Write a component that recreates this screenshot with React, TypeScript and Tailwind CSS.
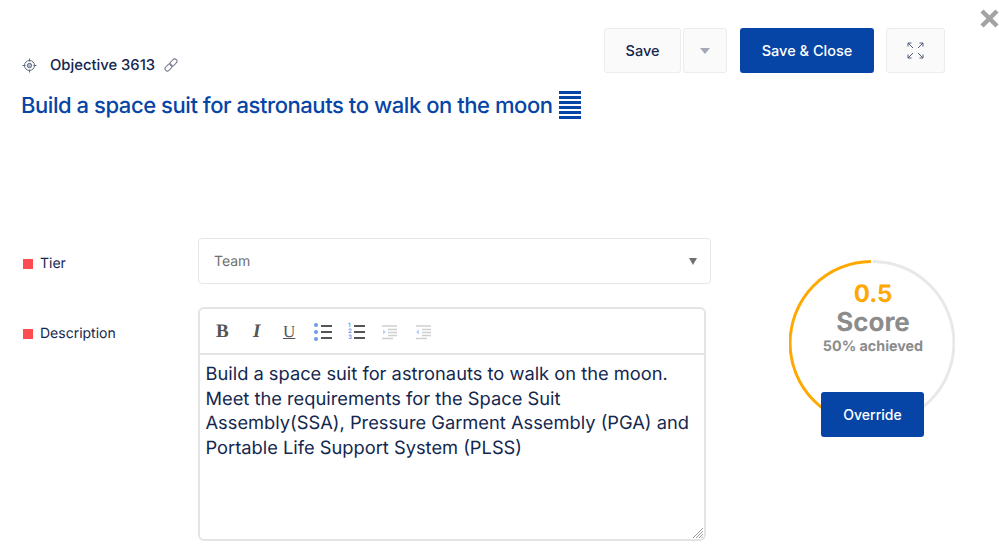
const font = { fontFamily: "Inter, 'Liberation Sans', sans-serif" };
const serif = { fontFamily: "'Liberation Serif', serif" };

function TargetIcon() {
  return (
    <svg width="15" height="15" viewBox="0 0 15 15" fill="none" stroke="#5f6b85" strokeWidth="1">
      <circle cx="7.5" cy="7.5" r="5" />
      <circle cx="7.5" cy="7.5" r="2.2" fill="#b4bac8" />
      <path d="M7.5 0.5v3M7.5 11.5v3M0.5 7.5h3M11.5 7.5h3" />
    </svg>
  );
}

function LinkIcon() {
  return (
    <svg width="16" height="16" viewBox="0 0 16 16" fill="none" stroke="#737b8c" strokeWidth="1">
      <g transform="rotate(-45 8 8)">
        <rect x="0.5" y="5.7" width="8" height="4.6" rx="2.3" />
        <rect x="7.5" y="5.7" width="8" height="4.6" rx="2.3" />
      </g>
    </svg>
  );
}

function ExpandIcon() {
  return (
    <svg width="17" height="17" viewBox="0 0 17 17" fill="none" stroke="#4d5a78" strokeWidth="1">
      <path d="M1 1l5 5M1 1v3.5M1 1h3.5M16 1l-5 5M16 1v3.5M16 1h-3.5M1 16l5-5M1 16v-3.5M1 16h3.5M16 16l-5-5M16 16v-3.5M16 16h-3.5" />
    </svg>
  );
}

function ListLines() {
  return (
    <div className="flex flex-col gap-[4px]">
      <div className="h-[2px] w-[11px] bg-[#555]" />
      <div className="h-[2px] w-[11px] bg-[#555]" />
      <div className="h-[2px] w-[11px] bg-[#555]" />
    </div>
  );
}

function Bullets() {
  return (
    <div className="flex w-[18px] items-center gap-[3px]">
      <div className="flex flex-col gap-[3px]">
        <div className="size-[4px] rounded-full bg-[#6c9be8]" />
        <div className="size-[4px] rounded-full bg-[#6c9be8]" />
        <div className="size-[4px] rounded-full bg-[#6c9be8]" />
      </div>
      <ListLines />
    </div>
  );
}

function Numbers() {
  return (
    <div className="flex w-[18px] items-center gap-[2px]">
      <div className="flex flex-col text-[6px] font-bold leading-[6px] text-[#6c9be8]">
        <span>1</span>
        <span>2</span>
        <span>3</span>
      </div>
      <ListLines />
    </div>
  );
}

function Indent({ flip }: { flip?: boolean }) {
  return (
    <svg width="18" height="16" viewBox="0 0 18 16" fill="none" stroke="#cfcfcf" strokeWidth="1.4">
      <path d="M1 2h15M7 5.5h9M7 8.5h9M7 11.5h9M1 14.5h11" />
      <path d={flip ? "M1 8l3-2.5v5z" : "M5 8L2 5.5v5z"} fill="#bcd3f3" stroke="none" />
    </svg>
  );
}

function ScoreRing() {
  return (
    <svg width="166" height="166" viewBox="0 0 166 166" fill="none" strokeWidth="3">
      <path d="M84 1.5A81.5 81.5 0 0 1 83 164.5" stroke="#e8e8e8" />
      <path d="M82 1.5A81.5 81.5 0 0 0 83 164.5" stroke="#ffa800" />
    </svg>
  );
}

export default function App() {
  return (
    <div className="relative h-[551px] w-[999px] overflow-hidden bg-white text-[#14274e] [text-rendering:geometricPrecision]" style={font}>
      <div className="absolute right-0 top-[6px] text-[#a3a3a3]">
        <svg width="20" height="24" viewBox="0 0 20 24" stroke="currentColor" strokeWidth="4.5">
          <path d="M3 5l15 15M18 5L3 20" />
        </svg>
      </div>

      <header className="flex h-[238px] justify-between pl-[21px] pr-[54px] pt-[28px]">
        <div className="pt-[26px]">
          <div className="flex items-center text-[14.8px] font-medium">
            <span className="ml-[1px]">
              <TargetIcon />
            </span>
            <span className="ml-[13px]">Objective 3613</span>
            <span className="ml-[8px]">
              <LinkIcon />
            </span>
          </div>
          <div className="mt-[14px] flex items-center gap-[6px] text-[22px] font-medium leading-[28px] tracking-[-0.44px] text-[#0645a5]">
            <span className="pt-[2px]">Build a space suit for astronauts to walk on the moon</span>
            <div className="flex w-[22px] flex-col gap-[2px]">
              <div className="h-[3px] bg-[#0645a5]" />
              <div className="h-[3px] bg-[#0645a5]" />
              <div className="h-[3px] bg-[#0645a5]" />
              <div className="h-[3px] bg-[#0645a5]" />
              <div className="h-[3px] bg-[#0645a5]" />
              <div className="h-[3px] bg-[#0645a5]" />
            </div>
          </div>
        </div>

        <div className="flex h-[45px] items-stretch text-[14.5px] font-medium">
          <button className="w-[77px] rounded-[3px] border border-[#ececec] bg-[#fafafa]">Save</button>
          <button className="ml-[2px] flex w-[44px] items-center justify-center rounded-[3px] border border-[#ececec] bg-[#fafafa]">
            <span className="size-0 border-x-[5px] border-t-[6px] border-x-transparent border-t-[#a4a7b5]" />
          </button>
          <button className="ml-[13px] w-[134px] rounded-[3px] bg-[#0645a5] text-white">Save &amp; Close</button>
          <button className="ml-[12px] flex w-[59px] items-center justify-center rounded-[3px] border border-[#ececec] bg-[#fafafa]">
            <ExpandIcon />
          </button>
        </div>
      </header>

      <main className="flex pl-[23px]">
        <div className="w-[175px] text-sm">
          <div className="flex h-[46px] items-center gap-[7px] pt-[5px]">
            <div className="size-[10px] bg-[#ff4d4f]" />
            <span>Tier</span>
          </div>
          <div className="mt-[23px] flex h-[46px] items-center gap-[7px] pt-[8px]">
            <div className="size-[10px] bg-[#ff4d4f]" />
            <span>Description</span>
          </div>
        </div>

        <div className="w-[513px]">
          <div className="flex h-[46px] items-center justify-between rounded-[4px] border border-[#e6e6e6] pl-[15px] pr-[13px] pt-[1px] text-sm text-[#6f6f6f]">
            <span>Team</span>
            <span className="size-0 border-x-[4px] border-t-[7px] border-x-transparent border-t-[#707070]" />
          </div>

          <div className="relative mt-[23px] h-[234px] w-[508px] rounded-[6px] border-2 border-[#e4e4e4]">
            <div className="flex h-[46px] items-center border-b-2 border-[#e4e4e4] pl-[16px] pt-[2px]">
              <span className="w-[37px] text-[19px] font-bold text-[#555]" style={serif}>
                B
              </span>
              <span className="w-[30px] text-[19px] font-bold italic text-[#555]" style={serif}>
                I
              </span>
              <span className="w-[31px] text-[17px] text-[#555] underline" style={serif}>
                U
              </span>
              <Bullets />
              <div className="w-[16px]" />
              <Numbers />
              <div className="w-[15px]" />
              <Indent />
              <div className="w-[16px]" />
              <Indent flip />
            </div>
            <p className="px-[5.5px] pt-[7px] text-[18.3px] leading-[24.5px]">
              Build a space suit for astronauts to walk on the moon. Meet the requirements for the Space Suit Assembly(SSA), Pressure Garment Assembly (PGA) and Portable Life Support System (PLSS)
            </p>
            <svg className="absolute bottom-[1px] right-[1px]" width="10" height="10" viewBox="0 0 10 10" stroke="#9a9a9a" strokeWidth="1">
              <path d="M0 10L10 0M3 10l7-7M6 10l4-4M8.5 10L10 8.5" />
            </svg>
          </div>
        </div>

        <div className="relative ml-[78px] mt-[22px] h-[166px] w-[166px]">
          <ScoreRing />
          <div className="absolute inset-x-0 top-[19px] flex flex-col items-center pl-[2px] font-bold">
            <span className="text-[24px] leading-[30px] text-[#ffa800]">0.5</span>
            <span className="text-[26px] leading-[28px] text-[#8c8c8c]">Score</span>
            <span className="text-[14.3px] leading-[20px] text-[#8c8c8c]">50% achieved</span>
          </div>
          <button className="absolute left-[32px] top-[132px] h-[45px] w-[103px] rounded-[3px] bg-[#0645a5] text-sm font-medium text-white">
            Override
          </button>
        </div>
      </main>
    </div>
  );
}
